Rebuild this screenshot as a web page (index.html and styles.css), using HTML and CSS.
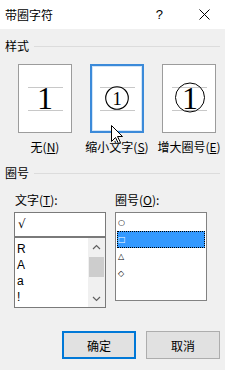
FILE: index.html
```html
<!DOCTYPE html>
<html lang="zh-CN">
<head>
<meta charset="utf-8">
<link rel="stylesheet" href="styles.css">
</head>
<body>
<div class="dialog">
  <div class="titlebar">
    <span class="title">带圈字符</span>
    <span class="help">?</span>
    <svg class="close" width="11" height="11" viewBox="0 0 11 11"><path d="M0.5 0.5 L10.5 10.5 M10.5 0.5 L0.5 10.5" stroke="#000" stroke-width="1" fill="none"/></svg>
  </div>
  <div class="content">
    <div class="group-head first">样式</div>
    <div class="styles">
      <div class="option">
        <div class="preview">
          <svg width="52" height="67" viewBox="0 0 52 67">
            <path d="M9 22.5 H44 M9 45.5 H44" stroke="#c8c8c8" stroke-width="1"/>
            <text x="26" y="44" text-anchor="middle" class="serif" font-size="32">1</text>
          </svg>
        </div>
        <div class="opt-label">无(<u>N</u>)</div>
      </div>
      <div class="option">
        <div class="preview selected">
          <svg width="50" height="65" viewBox="0 0 50 65">
            <path d="M8 21.5 H43 M8 44.5 H43" stroke="#c8c8c8" stroke-width="1"/>
            <circle cx="25" cy="32" r="11.3" stroke="#000" stroke-width="1.1" fill="none"/>
            <text x="25" y="38.5" text-anchor="middle" class="serif" font-size="18.5">1</text>
          </svg>
        </div>
        <div class="opt-label">缩小文字(<u>S</u>)</div>
        <svg class="cursor" width="13" height="20" viewBox="0 0 13 20"><path d="M0.5 0.5 L0.5 16.5 L4.5 12.5 L7.5 18.5 L9.5 17.5 L6.5 11.5 L11.5 11.5 Z" fill="#fff" stroke="#000" stroke-width="1" stroke-linejoin="round"/></svg>
      </div>
      <div class="option">
        <div class="preview">
          <svg width="52" height="67" viewBox="0 0 52 67">
            <path d="M9 22.5 H44 M9 45.5 H44" stroke="#c8c8c8" stroke-width="1"/>
            <circle cx="27" cy="32.5" r="14.5" stroke="#000" stroke-width="1" fill="none"/>
            <text x="27" y="44" text-anchor="middle" class="serif" font-size="32">1</text>
          </svg>
        </div>
        <div class="opt-label">增大圈号(<u>E</u>)</div>
      </div>
    </div>
    <div class="group-head second">圈号</div>
    <div class="columns">
      <div class="col">
        <div class="field-label left">文字(<u>T</u>):</div>
        <div class="text-input">√</div>
        <div class="listbox scroll">
          <ul class="items">
            <li>R</li>
            <li>A</li>
            <li>a</li>
            <li>!</li>
          </ul>
          <div class="scrollbar">
            <div class="sb-btn"><svg width="9" height="6" viewBox="0 0 9 6"><path d="M1 5 L4.5 1.5 L8 5" stroke="#606060" stroke-width="1.2" fill="none"/></svg></div>
            <div class="sb-track"><div class="sb-thumb"></div></div>
            <div class="sb-btn"><svg width="9" height="6" viewBox="0 0 9 6"><path d="M1 1 L4.5 4.5 L8 1" stroke="#606060" stroke-width="1.2" fill="none"/></svg></div>
          </div>
        </div>
      </div>
      <div class="col">
        <div class="field-label">圈号(<u>O</u>):</div>
        <ul class="listbox shapes">
          <li>○</li>
          <li class="sel">□</li>
          <li>△</li>
          <li>◇</li>
        </ul>
      </div>
    </div>
    <div class="buttons">
      <button class="btn primary">确定</button>
      <button class="btn">取消</button>
    </div>
  </div>
</div>
</body>
</html>
```
FILE: styles.css
```css
html, body {
  margin: 0;
  padding: 0;
}
body {
  width: 225px;
  height: 370px;
  background: #f0f0f0;
  font-family: "Noto Sans CJK SC", sans-serif;
  font-size: 12px;
  color: #000;
  overflow: hidden;
}
.titlebar {
  height: 29px;
  background: #fff;
  display: flex;
  align-items: center;
}
.title {
  padding-left: 5px;
  line-height: 16px;
}
.help {
  margin-left: auto;
  margin-right: 36px;
  font-family: "Liberation Sans", sans-serif;
  font-size: 13px;
  line-height: 16px;
}
.close {
  margin-right: 15px;
}
.content {
  padding: 0 5px;
}
.group-head {
  display: flex;
  align-items: center;
  height: 14px;
  line-height: 14px;
}
.group-head::after {
  content: "";
  flex: 1;
  height: 1px;
  background: #dcdcdc;
  margin-left: 5px;
}
.group-head.first { margin-top: 10px; }
.group-head.second { margin-top: 12px; }
.styles {
  display: flex;
  gap: 18px;
  padding-left: 13px;
  margin-top: 11px;
}
.option {
  position: relative;
  width: 54px;
  display: flex;
  flex-direction: column;
  align-items: center;
}
.preview {
  width: 54px;
  height: 69px;
  box-sizing: border-box;
  border: 1px solid #9c9c9c;
  background: #fff;
}
.preview svg {
  display: block;
}
.preview.selected {
  border: 2px solid #3b8ad9;
  box-shadow: inset 0 0 0 1px #d3e5f7;
}
.serif {
  font-family: "Liberation Serif", serif;
}
.opt-label {
  margin-top: 7px;
  line-height: 14px;
  white-space: nowrap;
}
.cursor {
  position: absolute;
  left: 21px;
  top: 61px;
}
.columns {
  display: flex;
  gap: 9px;
  padding-left: 9px;
  margin-top: 13px;
}
.col {
  width: 92px;
}
.field-label {
  height: 14px;
  line-height: 14px;
  white-space: nowrap;
}
.field-label.left {
  padding-left: 1px;
}
.text-input {
  margin-top: 5px;
  height: 25px;
  box-sizing: border-box;
  border: 1px solid #7a7a7a;
  background: #fff;
  padding-left: 3px;
  line-height: 23px;
  font-family: "DejaVu Sans", sans-serif;
  font-size: 12px;
}
.listbox {
  box-sizing: border-box;
  border: 1px solid #828282;
  background: #fff;
  margin: 0;
  list-style: none;
}
.listbox.scroll {
  height: 71px;
  display: flex;
  border-color: #7a7a7a;
}
.items {
  flex: 1;
  margin: 0;
  padding: 3px 0 0 2px;
  list-style: none;
  font-family: "Liberation Sans", sans-serif;
  font-size: 12px;
  line-height: 16px;
  overflow: hidden;
}
.scrollbar {
  width: 17px;
  background: #f0f0f0;
  display: flex;
  flex-direction: column;
}
.sb-btn {
  height: 17px;
  display: flex;
  align-items: center;
  justify-content: center;
}
.sb-track {
  flex: 1;
}
.sb-thumb {
  margin: 2px 1px 0;
  height: 20px;
  background: #cdcdcd;
}
.shapes {
  margin-top: 5px;
  height: 89px;
  padding: 1px;
}
.shapes li {
  height: 17px;
  line-height: 17px;
  padding-left: 1px;
  font-family: "DejaVu Sans", sans-serif;
  font-size: 8px;
}
.shapes li.sel {
  background: #3399ff;
  color: #fff;
  outline: 1px dotted #000;
  outline-offset: -1px;
}
.buttons {
  display: flex;
  justify-content: flex-end;
  gap: 10px;
  margin-top: 23px;
}
.btn {
  width: 74px;
  height: 28px;
  box-sizing: border-box;
  padding: 0;
  background: #e1e1e1;
  border: 1px solid #adadad;
  font-family: "Noto Sans CJK SC", sans-serif;
  font-size: 12px;
  color: #000;
}
.btn.primary {
  border: 2px solid #0078d7;
}
```
